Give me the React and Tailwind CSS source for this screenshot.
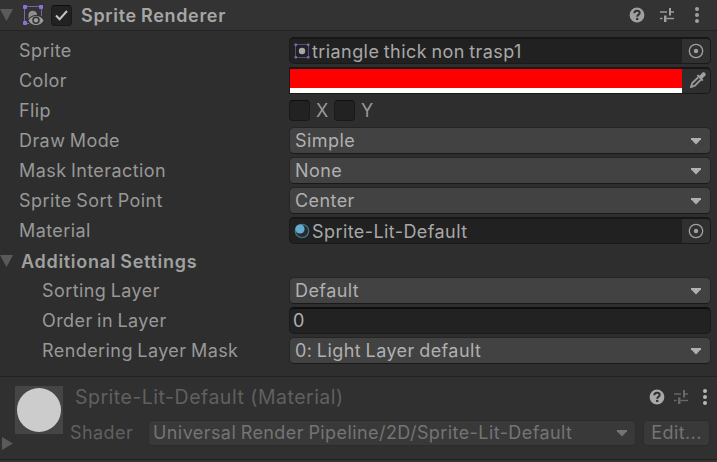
import React from "react";

function Help({ className = "" }) {
  return (
    <svg className={className} width="16" height="16" viewBox="0 0 16 16">
      <circle cx="8" cy="8" r="7.4" fill="currentColor" />
      <path d="M5.300 6.3C5.300 4.6 6.400 3.7 8 3.7s2.7.9 2.7 2.2c0 1.7-2.500 1.8-2.500 3.8" fill="none" stroke="#303030" strokeWidth="2" />
      <rect x="7.1" y="10.9" width="2.2" height="2.1" fill="#303030" />
    </svg>
  );
}

function Sliders({ className = "" }) {
  return (
    <svg className={className} width="16" height="16" viewBox="0 0 16 16" fill="currentColor">
      <rect x="1" y="4.300" width="7" height="1.4" />
      <rect x="10" y="1" width="2" height="7.500" />
      <rect x="12" y="4.300" width="3" height="1.4" />
      <rect x="1" y="10.8" width="2.500" height="1.4" />
      <rect x="5" y="8.500" width="2.5" height="6.500" />
      <rect x="7.5" y="10.8" width="7.5" height="1.4" />
    </svg>
  );
}

function Dots() {
  return (
    <svg width="6" height="18" viewBox="0 0 6 18" fill="currentColor">
      <circle cx="3" cy="3" r="2" />
      <circle cx="3" cy="9" r="2" />
      <circle cx="3" cy="15" r="2" />
    </svg>
  );
}

function Foldout() {
  return (
    <svg className="shrink-0" width="13" height="12" viewBox="0 0 13 12">
      <path d="M0 0H13L6.5 12Z" fill="#5a5a5a" />
    </svg>
  );
}

function Caret() {
  return (
    <svg className="mt-px shrink-0" width="10" height="7" viewBox="0 0 10 7">
      <path d="M0 0H10V1.200L5 6.5L0 1.200Z" fill="currentColor" />
    </svg>
  );
}

function RendererIcon() {
  return (
    <svg className="shrink-0" width="21" height="21" viewBox="0 0 21 21">
      <path d="M6 18.5H1.500V1.500H18.500V11" fill="none" stroke="#7a62b0" strokeWidth="1" />
      <g fill="#8f72cf">
        <rect x="0" y="0" width="4" height="4" rx="1" />
        <rect x="16" y="0" width="4" height="4" rx="1" />
        <rect x="0" y="16" width="4" height="4" rx="1" />
      </g>
      <path d="M5.500 14V9.500A4.300 4.300 0 0 1 14 9.500V14Z" fill="#8e8e8e" />
      <path d="M5.500 15.500C7.500 11.900 10.300 10.900 13 10.900S18.600 11.900 20.500 15.500C18.600 19.100 15.700 20 13 20S7.500 19.100 5.500 15.500Z" fill="#9a9a9a" stroke="#333333" strokeWidth="1.600" paintOrder="stroke" />
      <circle cx="13" cy="15.300" r="3" fill="#9a9a9a" stroke="#303030" strokeWidth="1.500" />
    </svg>
  );
}

function SpriteIcon() {
  return (
    <svg className="shrink-0" width="16" height="16" viewBox="0 0 16 16">
      <rect x="1.500" y="1.500" width="13" height="13" fill="none" stroke="#594a80" />
      <g fill="#8068b5">
        <rect x="0.500" y="0.500" width="2.500" height="2.500" rx=".7" />
        <rect x="13" y="0.500" width="2.500" height="2.500" rx=".7" />
        <rect x="0.500" y="13" width="2.500" height="2.500" rx=".7" />
        <rect x="13" y="13" width="2.500" height="2.500" rx=".7" />
      </g>
      <circle cx="8" cy="8" r="3.200" fill="#a8a8a8" />
    </svg>
  );
}

function MaterialIcon() {
  return (
    <svg className="shrink-0" width="16" height="16" viewBox="0 0 16 16">
      <circle cx="8" cy="8" r="6.700" fill="#252b2f" stroke="#417084" strokeWidth="1.300" />
      <circle cx="6" cy="6" r="4.600" fill="#63abcf" />
    </svg>
  );
}

function Picker() {
  return (
    <span className="flex h-full w-7 items-center justify-center bg-[#303030] text-[#a0a0a0]">
      <svg width="16" height="16" viewBox="0 0 16 16">
        <circle cx="8" cy="8" r="6.700" fill="none" stroke="currentColor" strokeWidth="1.300" />
        <circle cx="8" cy="8" r="2.200" fill="currentColor" />
      </svg>
    </span>
  );
}

function Dropper() {
  return (
    <svg width="18" height="18" viewBox="0 0 18 18">
      <path d="M9.300 6.200L3.300 12.100L2.200 15.800L5.900 14.700L11.900 8.700" fill="none" stroke="#989898" strokeWidth="1.900" />
      <path d="M1 17L2 13.500L4.500 16Z" fill="#989898" />
      <path d="M7.700 4.600L9 3.500L10.500 4.700L13.300 1.700C14.900 .1 17.900 3 16.200 4.700L13.200 7.500L14.400 9L13.200 10.200Z" fill="#a0a0a0" />
    </svg>
  );
}

function Row({ label, indent, children }) {
  return (
    <div className="flex h-[30px] items-center">
      <div className={`${indent ? "pl-[42px]" : "pl-[19px]"} w-[289px] shrink-0`}>{label}</div>
      <div className="flex h-[28px] items-center self-start pt-px">{children}</div>
    </div>
  );
}

function Select({ value }) {
  return (
    <div className="flex h-[27px] w-[422px] items-center justify-between rounded-[5px] border border-[#242424] border-b-[#191919] bg-[#424242] pr-[9px] pl-[5px] text-[#b0b0b0]">
      <span>{value}</span>
      <Caret />
    </div>
  );
}

function ObjectField({ icon, value }) {
  return (
    <div className="flex h-[27px] w-[422px] items-center overflow-hidden rounded-[5px] border border-t-2 border-[#1a1a1a] border-t-[#171717] bg-[#212121] pl-1">
      {icon}
      <span className="ml-[2px] grow pt-[2px] text-[#a8a8a8]">{value}</span>
      <Picker />
    </div>
  );
}

function Checkbox({ checked }) {
  return (
    <span className="flex size-[21px] shrink-0 items-center justify-center rounded-[4px] border border-[#191919] border-t-[#0e0e0e] bg-[#222222]">
      {checked && (
        <svg width="13" height="11" viewBox="0 0 13 11">
          <path d="M1 5.500L4.600 9.200L12 1" fill="none" stroke="#c4c4c4" strokeWidth="2" />
        </svg>
      )}
    </span>
  );
}

export default function App() {
  return (
    <div className="h-[462px] w-[717px] overflow-hidden bg-[#2e2e2e] font-['Inter',sans-serif] text-[18px] leading-[22px] tracking-[0.42px] whitespace-nowrap text-[#989898] [word-spacing:-1px]">
      <header className="flex h-[31px] items-center border-b border-[#242424] bg-[#333333]">
        <Foldout />
        <div className="ml-[10px] flex"><RendererIcon /></div>
        <div className="ml-[7px] flex"><Checkbox checked /></div>
        <h1 className="ml-[9px] grow pt-px font-semibold tracking-[0.67px] text-[#a6a6a6]">Sprite Renderer</h1>
        <div className="flex items-center pr-[17px] text-[#a0a0a0]">
          <Help />
          <Sliders className="ml-[14px]" />
          <span className="ml-[19px]"><Dots /></span>
        </div>
      </header>

      <main className="h-[345px] pt-[5px]">
        <Row label="Sprite"><ObjectField icon={<SpriteIcon />} value="triangle thick non trasp1" /></Row>
        <Row label="Color">
          <div className="flex h-[27px] w-[422px] overflow-hidden rounded-r-[5px] border border-t-2 border-[#1a1a1a] border-t-[#171717]">
            <div className="flex grow flex-col">
              <div className="grow bg-[#ff0000]" />
              <div className="h-[5px] bg-white" />
            </div>
            <span className="flex w-7 items-center justify-center pb-[3px] pl-[3px]"><Dropper /></span>
          </div>
        </Row>
        <Row label="Flip">
          <Checkbox /><span className="w-[24px] pl-[6px]">X</span>
          <Checkbox /><span className="pl-[6px]">Y</span>
        </Row>
        <Row label="Draw Mode"><Select value="Simple" /></Row>
        <Row label="Mask Interaction"><Select value="None" /></Row>
        <Row label="Sprite Sort Point"><Select value="Center" /></Row>
        <Row label="Material"><ObjectField icon={<MaterialIcon />} value="Sprite-Lit-Default" /></Row>
        <div className="flex h-[30px] items-center">
          <Foldout />
          <h2 className="ml-[8px] pt-px font-semibold tracking-[0.7px] text-[#a0a0a0]">Additional Settings</h2>
        </div>
        <Row indent label="Sorting Layer"><Select value="Default" /></Row>
        <Row indent label="Order in Layer">
          <div className="flex h-[27px] w-[422px] items-center rounded-[5px] border border-t-2 border-[#1a1a1a] border-t-[#0e0e0e] bg-[#222222] pl-[3px] text-[#b0b0b0]">0</div>
        </Row>
        <Row indent label="Rendering Layer Mask"><Select value="0: Light Layer default" /></Row>
      </main>

      <section className="flex h-[84px] border-y border-[#212121] bg-[#303030] text-[#606060]">
        <div className="flex w-[63px] shrink-0 flex-col">
          <div className="mt-[9px] ml-[15px] flex size-12 items-center justify-center bg-[#454545]">
            <div className="size-11 rounded-full bg-[#cccccc]" />
          </div>
          <svg className="mt-[3px] ml-[2px]" width="11" height="13" viewBox="0 0 11 13">
            <path d="M0 0V13L11 6.500Z" fill="#5a5a5a" />
          </svg>
        </div>
        <div className="flex grow flex-col">
          <div className="mt-[8px] flex h-6 items-center pr-[9px] pl-3">
            <h2 className="grow text-[19.500px] tracking-[0.5px] [word-spacing:0px]">Sprite-Lit-Default (Material)</h2>
            <Help className="text-[#a8a8a8]" />
            <Sliders className="ml-2 text-[#686868]" />
            <span className="ml-[13px] text-[#b8b8b8]"><Dots /></span>
          </div>
          <div className="mt-[11px] flex h-[26px] items-center pl-[7px]">
            <span className="w-[78px]">Shader</span>
            <div className="flex h-[26px] w-[488px] items-center justify-between rounded-[4px] border border-[#2c2c2c] bg-[#393939] pr-[8px] pl-1 text-[#747474]">
              <span>Universal Render Pipeline/2D/Sprite-Lit-Default</span>
              <Caret />
            </div>
            <div className="ml-[7px] flex h-[26px] w-[67px] items-center justify-center rounded-[4px] border border-[#2c2c2c] bg-[#393939] text-[#747474]">Edit...</div>
          </div>
        </div>
      </section>
      <footer className="h-[2px] bg-[#353333]" />
    </div>
  );
}
